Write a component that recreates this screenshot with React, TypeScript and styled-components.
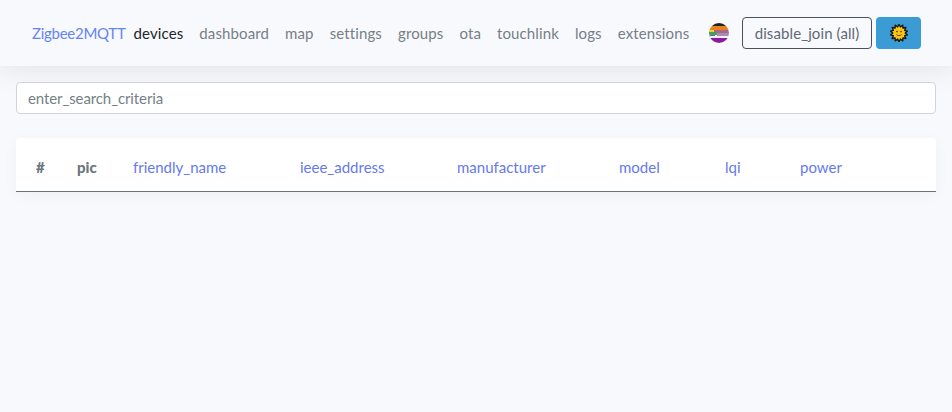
import styled, { createGlobalStyle } from "styled-components";

const GlobalStyle = createGlobalStyle`
  html, body {
    margin: 0;
    padding: 0;
    background: #f8f9fc;
    color: #6c757d;
    font-family: "Lato", "Noto Sans", sans-serif;
    font-size: 15px;
  }
`;

const Page = styled.div`
  min-height: 412px;
  background: #f8f9fc;
`;

const Navbar = styled.nav`
  height: 66px;
  box-sizing: border-box;
  display: flex;
  align-items: center;
  padding: 0 31px 0 32px;
  background: #f8f9fc;
  box-shadow: 0 0 32px rgba(33, 37, 41, 0.13);
`;

const Brand = styled.a`
  color: #6484f2;
  margin-right: 8px;
  letter-spacing: -0.27px;
`;

const NavList = styled.div`
  display: flex;
  gap: 16px;
  flex: 1;
  letter-spacing: 0.12px;
`;

const NavLink = styled.a<{ $active?: boolean }>`
  color: ${(p) => (p.$active ? "#212529" : "#767f87")};
`;

const Actions = styled.div`
  display: flex;
  align-items: center;
  gap: 4px;
`;

const FlagWrap = styled.div`
  width: 20px;
  height: 20px;
  margin-right: 9px;
`;

const JoinButton = styled.button`
  height: 32px;
  width: 130px;
  padding: 0;
  background: transparent;
  border: 1px solid #495057;
  border-radius: 4px;
  color: #5f6974;
  font: inherit;
  letter-spacing: 0.1px;
`;

const ThemeButton = styled.button`
  width: 45px;
  height: 32px;
  padding: 0;
  display: flex;
  align-items: center;
  justify-content: center;
  background: #3a9bd5;
  border: 0;
  border-radius: 4px;
`;

const Main = styled.main`
  padding: 16px;
`;

const Search = styled.input`
  display: block;
  width: 100%;
  height: 32px;
  box-sizing: border-box;
  padding: 0 11px;
  background: #fff;
  border: 1px solid #ced4da;
  border-radius: 4px;
  color: #767f87;
  font: inherit;
  letter-spacing: -0.1px;
  &::placeholder {
    color: #767f87;
    opacity: 1;
  }
`;

const Card = styled.div`
  margin-top: 24px;
  background: #fff;
  border-radius: 4px 4px 0 0;
  box-shadow: 0 4px 16px rgba(33, 37, 41, 0.04);
`;

const HeadRow = styled.div`
  height: 54px;
  box-sizing: border-box;
  display: grid;
  grid-template-columns: 61px 56px 167px 157px 162px 106px 75px 1fr;
  align-items: center;
  border-bottom: 1px solid #6c757d;
  padding-top: 4px;
`;

const HeadCell = styled.div<{ $sort?: boolean }>`
  color: ${(p) => (p.$sort ? "#667aec" : "#6c757d")};
  font-weight: ${(p) => (p.$sort ? 400 : 900)};
`;

const HashCell = styled(HeadCell)`
  padding-left: 20px;
`;

const Flag = () => (
  <svg width="20" height="20" viewBox="0 0 20 20">
    <defs>
      <clipPath id="round">
        <circle cx="10" cy="10" r="10" />
      </clipPath>
    </defs>
    <g clipPath="url(#round)">
      <rect width="20" height="3" fill="#222" />
      <rect y="3" width="20" height="4" fill="#e8821e" />
      <rect y="7" width="20" height="3" fill="#a8668e" />
      <rect y="7" width="5" height="2" fill="#e8d82a" />
      <rect y="9" width="8" height="3" fill="#4aa04e" />
      <rect x="8" y="10" width="12" height="3" fill="#a88cb0" />
      <rect y="12" width="6" height="2" fill="#4a78c8" />
      <rect y="13" width="20" height="2" fill="#eeeef4" />
      <rect y="15" width="20" height="5" fill="#8a1c9a" />
    </g>
  </svg>
);

const Sun = () => {
  const spikes = 14;
  const points = Array.from({ length: spikes * 2 }, (_, i) => {
    const r = i % 2 === 0 ? 8.8 : 6.2;
    const a = (i * Math.PI) / spikes;
    return `${(9 + r * Math.sin(a)).toFixed(2)},${(9 - r * Math.cos(a)).toFixed(2)}`;
  }).join(" ");
  return (
    <svg width="18" height="18" viewBox="0 0 18 18">
      <polygon points={points} fill="#fcc60e" stroke="#141414" strokeWidth="1.3" strokeLinejoin="round" />
      <circle cx="7" cy="7.6" r="0.8" fill="#3a2a00" />
      <circle cx="11" cy="7.6" r="0.8" fill="#3a2a00" />
      <path d="M6.4 10.6c1.5 1.4 3.7 1.4 5.2 0" fill="none" stroke="#3a2a00" strokeWidth="0.8" />
    </svg>
  );
};

const links = ["dashboard", "map", "settings", "groups", "ota", "touchlink", "logs", "extensions"];
const columns = ["friendly_name", "ieee_address", "manufacturer", "model", "lqi", "power"];

export default function App() {
  return (
    <Page>
      <GlobalStyle />
      <Navbar>
        <Brand>Zigbee2MQTT</Brand>
        <NavList>
          <NavLink $active>devices</NavLink>
          {links.map((l) => (
            <NavLink key={l}>{l}</NavLink>
          ))}
        </NavList>
        <Actions>
          <FlagWrap>
            <Flag />
          </FlagWrap>
          <JoinButton>disable_join (all)</JoinButton>
          <ThemeButton>
            <Sun />
          </ThemeButton>
        </Actions>
      </Navbar>
      <Main>
        <Search placeholder="enter_search_criteria" />
        <Card>
          <HeadRow>
            <HashCell>#</HashCell>
            <HeadCell>pic</HeadCell>
            {columns.map((c) => (
              <HeadCell key={c} $sort>
                {c}
              </HeadCell>
            ))}
          </HeadRow>
        </Card>
      </Main>
    </Page>
  );
}
